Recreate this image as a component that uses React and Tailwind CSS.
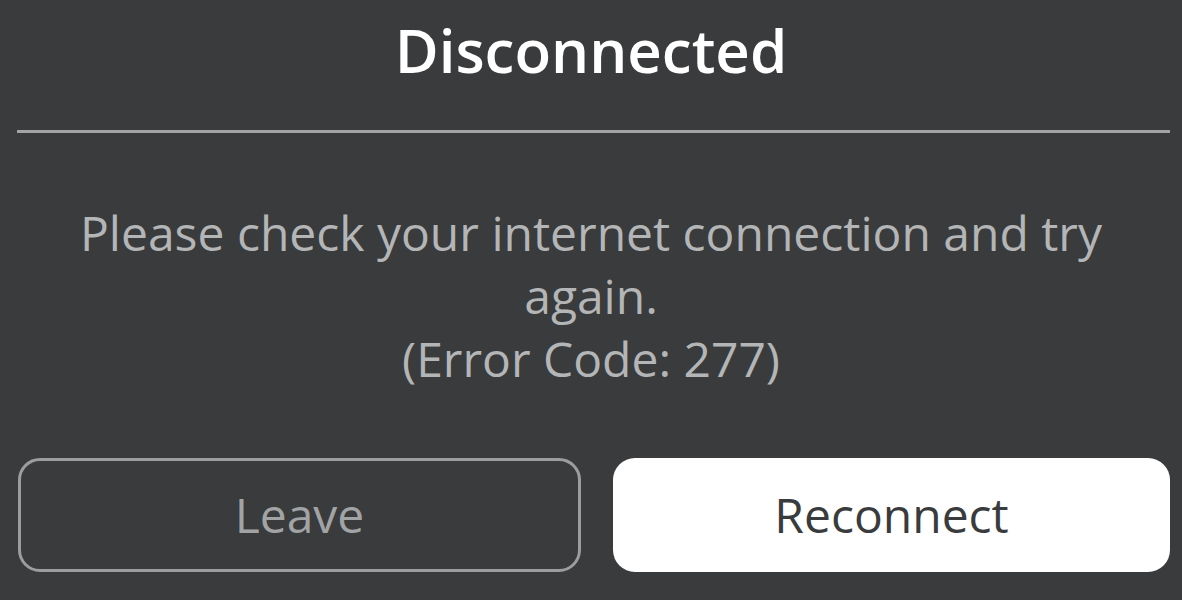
export default function App() {
  const font = { fontFamily: '"Open Sans", "Noto Sans", sans-serif' };
  return (
    <div className="w-[1182px] h-[600px] bg-[#393b3d] flex flex-col overflow-hidden" style={font}>
      <div className="h-[100px] flex items-center justify-center text-white font-semibold text-[60px] leading-none">
        Disconnected
      </div>
      <div className="mt-[30px] ml-[17px] mr-[12px] h-[3px] bg-[#a3a4a5]" />
      <div className="mt-[68px] px-[20px] text-center text-[#b4b5b6] text-[48px] leading-[63px]">
        <div>Please check your internet connection and try</div>
        <div>again.</div>
        <div>(Error Code: 277)</div>
      </div>
      <div className="mt-auto mb-[28px] ml-[18px] mr-[12px] flex gap-[32px]">
        <div className="flex-1 h-[114px] rounded-[22px] border-[3px] border-[#9c9d9e] flex items-center justify-center text-[#a2a3a4] text-[48px]">
          Leave
        </div>
        <div className="flex-1 h-[114px] rounded-[22px] bg-white flex items-center justify-center text-[#393b3d] text-[48px]">
          Reconnect
        </div>
      </div>
    </div>
  );
}
